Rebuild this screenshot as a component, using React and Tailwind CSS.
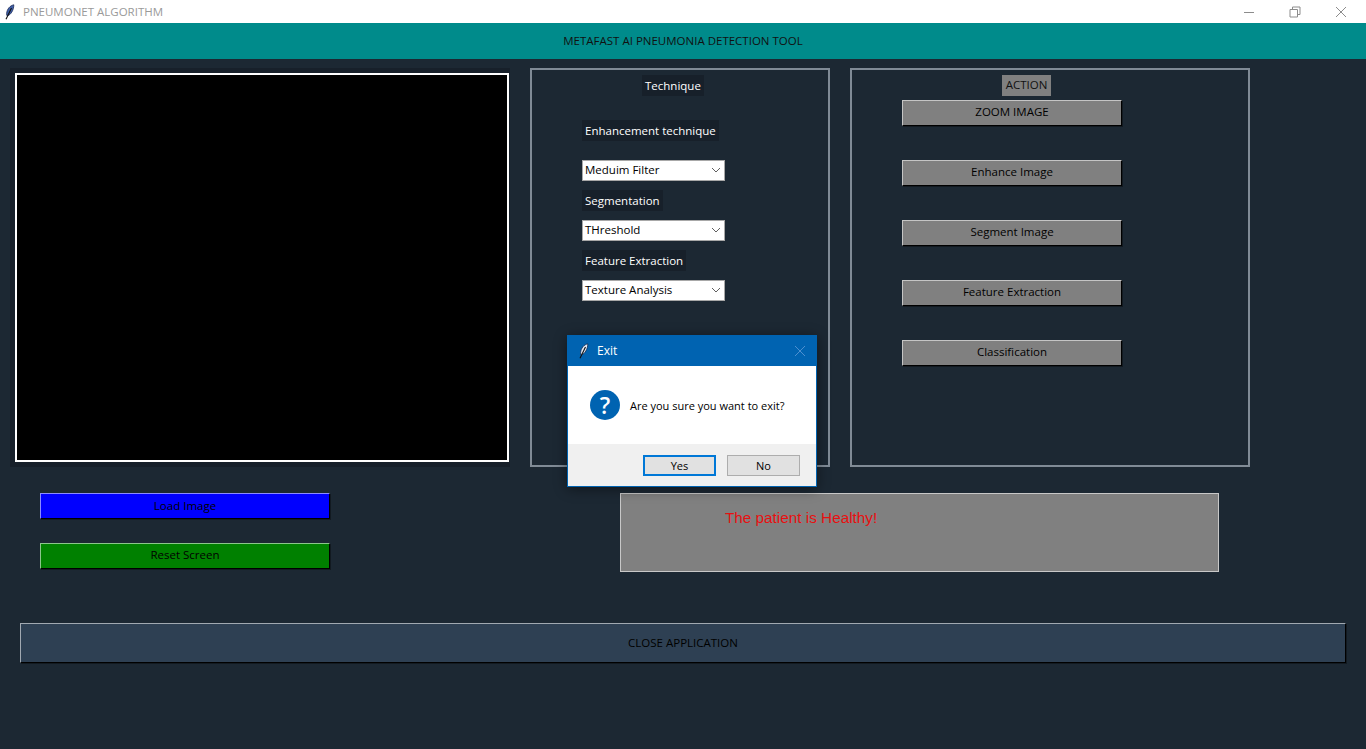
import React from "react";

const uiFont = "font-['Open_Sans','Noto_Sans',sans-serif]";

// tk's default window icon
const Feather = ({ fill = "#3f5fa8", edge = "#1c2a55" }) => (
  <svg width="10" height="16" viewBox="0 0 10 16" fill="none">
    <path d="M8.8 0.8C5 1.6 2 5 1.6 9.6C1.5 10.8 1.8 11.6 2.4 12C5.6 10.8 8.8 6.5 8.8 0.8Z" fill={fill} stroke={edge} strokeWidth="0.8" />
    <path d="M6.5 4L1 15.2" stroke="#101010" strokeWidth="1.1" />
  </svg>
);

const Chevron = () => (
  <svg width="10" height="6" viewBox="0 0 10 6" fill="none" className="ml-auto mr-[3px]">
    <path d="M1 1L5 5L9 1" stroke="#606060" strokeWidth="1" />
  </svg>
);

const Label = ({ children, className = "" }) => (
  <div className={`h-[21px] w-fit bg-[#17202a] px-[3px] text-[11.5px] leading-[21px] text-white ${className}`}>
    {children}
  </div>
);

const Dropdown = ({ value, className = "" }) => (
  <div className={`flex h-[21px] w-[143px] items-center border border-[#a8a8a8] bg-white pb-[1px] pl-[2px] text-[11.5px] text-black ${className}`}>
    {value}
    <Chevron />
  </div>
);

const RaisedButton = ({ label, className = "" }) => (
  <button className={`block border border-t-white/55 border-l-white/55 border-r-black border-b-black text-[11.5px] text-black shadow-[1px_1px_0_rgba(0,0,0,0.35)] ${className}`}>
    {label}
  </button>
);

const actions = ["ZOOM IMAGE", "Enhance Image", "Segment Image", "Feature Extraction", "Classification"];

const App = () => {
  return (
    <div className={`relative h-[749px] w-[1366px] overflow-hidden bg-[#1c2833] ${uiFont}`}>
      {/* Title bar */}
      <div className="flex h-[23px] items-center bg-white">
        <div className="ml-[5px] flex w-[18px]">
          <Feather />
        </div>
        <span className="text-[11.5px] text-[#9a9a9a]">PNEUMONET ALGORITHM</span>
        <div className="ml-auto flex items-center">
          <svg width="12" height="12" viewBox="0 0 12 12" className="mr-[34px]">
            <path d="M1 6.5H11" stroke="#8c8c8c" />
          </svg>
          <svg width="12" height="12" viewBox="0 0 12 12" fill="none" className="mr-[34px]">
            <path d="M1 3.5H8.5V11H1Z M3.5 3.5V1H11V8.5H8.5" stroke="#8c8c8c" />
          </svg>
          <svg width="12" height="12" viewBox="0 0 12 12" className="mr-[19px]">
            <path d="M1 1L11 11M11 1L1 11" stroke="#8c8c8c" />
          </svg>
        </div>
      </div>

      {/* Header */}
      <div className="flex h-[36px] items-center justify-center bg-[#008b8b] pb-[1px] text-[11.5px] text-[#111]">
        METAFAST AI PNEUMONIA DETECTION TOOL
      </div>

      {/* Top panels */}
      <div className="mt-[9px] ml-[10px] flex gap-[20px]">
        <div className="h-[399px] w-[500px] bg-[#17202a] pt-[5px] pl-[5px]">
          <div className="h-[389px] w-[494px] border-2 border-white bg-black" />
        </div>

        <div className="flex h-[399px] w-[300px] flex-col border-2 border-[#808b96]">
          <Label className="mt-[5px] ml-[110px]">Technique</Label>
          <Label className="mt-[24px] ml-[50px]">Enhancement technique</Label>
          <Dropdown value="Meduim Filter" className="mt-[19px] ml-[50px]" />
          <Label className="mt-[9px] ml-[50px]">Segmentation</Label>
          <Dropdown value="THreshold" className="mt-[9px] ml-[50px]" />
          <Label className="mt-[9px] ml-[50px]">Feature Extraction</Label>
          <Dropdown value="Texture Analysis" className="mt-[9px] ml-[50px]" />
        </div>

        <div className="flex h-[399px] w-[400px] flex-col border-2 border-[#808b96]">
          <div className="mt-[5px] ml-[150px] h-[21px] w-[49px] bg-[#808080] text-center text-[11.5px] leading-[20px] text-[#111]">
            ACTION
          </div>
          <div className="mt-[4px] ml-[50px] flex flex-col gap-[34px]">
            {actions.map((a) => (
              <RaisedButton key={a} label={a} className="h-[26px] w-[220px] bg-[#808080] pb-[2px]" />
            ))}
          </div>
        </div>
      </div>

      {/* Load / reset and result */}
      <div className="mt-[26px] flex">
        <div className="ml-[40px] flex w-[290px] flex-col gap-[24px]">
          <RaisedButton label="Load Image" className="h-[26px] w-[290px] bg-[#0000ff]" />
          <RaisedButton label="Reset Screen" className="h-[26px] w-[290px] bg-[#008000] pb-[2px]" />
        </div>
        <div className="ml-[290px] h-[79px] w-[599px] border border-[#c8c8c8] bg-[#808080] pt-[14px] pl-[104px] font-['Liberation_Sans',sans-serif] text-[15.3px] leading-[20px] text-[#e81010]">
          The patient is Healthy!
        </div>
      </div>

      {/* Close */}
      <div className="mt-[51px] ml-[20px]">
        <RaisedButton label="CLOSE APPLICATION" className="h-[40px] w-[1326px] bg-[#2e4053]" />
      </div>

      {/* Exit dialog */}
      <div className="absolute top-[335px] left-[567px] flex h-[152px] w-[250px] flex-col border border-[#0063b1] bg-white shadow-[0_2px_12px_rgba(0,0,0,0.45)]">
        <div className="flex h-[30px] items-center bg-[#0063b1] text-[12px] text-white">
          <div className="ml-[11px] flex w-[18px]">
            <Feather fill="#dfe8f5" edge="#13294f" />
          </div>
          Exit
          <svg width="10" height="10" viewBox="0 0 10 10" className="mr-[11px] ml-auto">
            <path d="M0 0L10 10M10 0L0 10" stroke="#4d8fd0" />
          </svg>
        </div>
        <div className="flex h-[78px] items-center pl-[22px]">
          <div className="flex h-[30px] w-[30px] items-center justify-center rounded-full bg-[#0063b1] text-[23px] font-semibold leading-none text-white">
            ?
          </div>
          <span className="ml-[10px] pt-[2px] text-[11px] text-black">Are you sure you want to exit?</span>
        </div>
        <div className="flex flex-1 items-center justify-end gap-[11px] bg-[#f0f0f0] pr-[16px]">
          <button className="h-[21px] w-[73px] border-2 border-[#0078d7] bg-[#e1e1e1] pt-[1px] text-[11px] text-black">Yes</button>
          <button className="h-[21px] w-[73px] border border-[#adadad] bg-[#e1e1e1] pt-[2px] text-[11px] text-black">No</button>
        </div>
      </div>
    </div>
  );
};

export default App;
